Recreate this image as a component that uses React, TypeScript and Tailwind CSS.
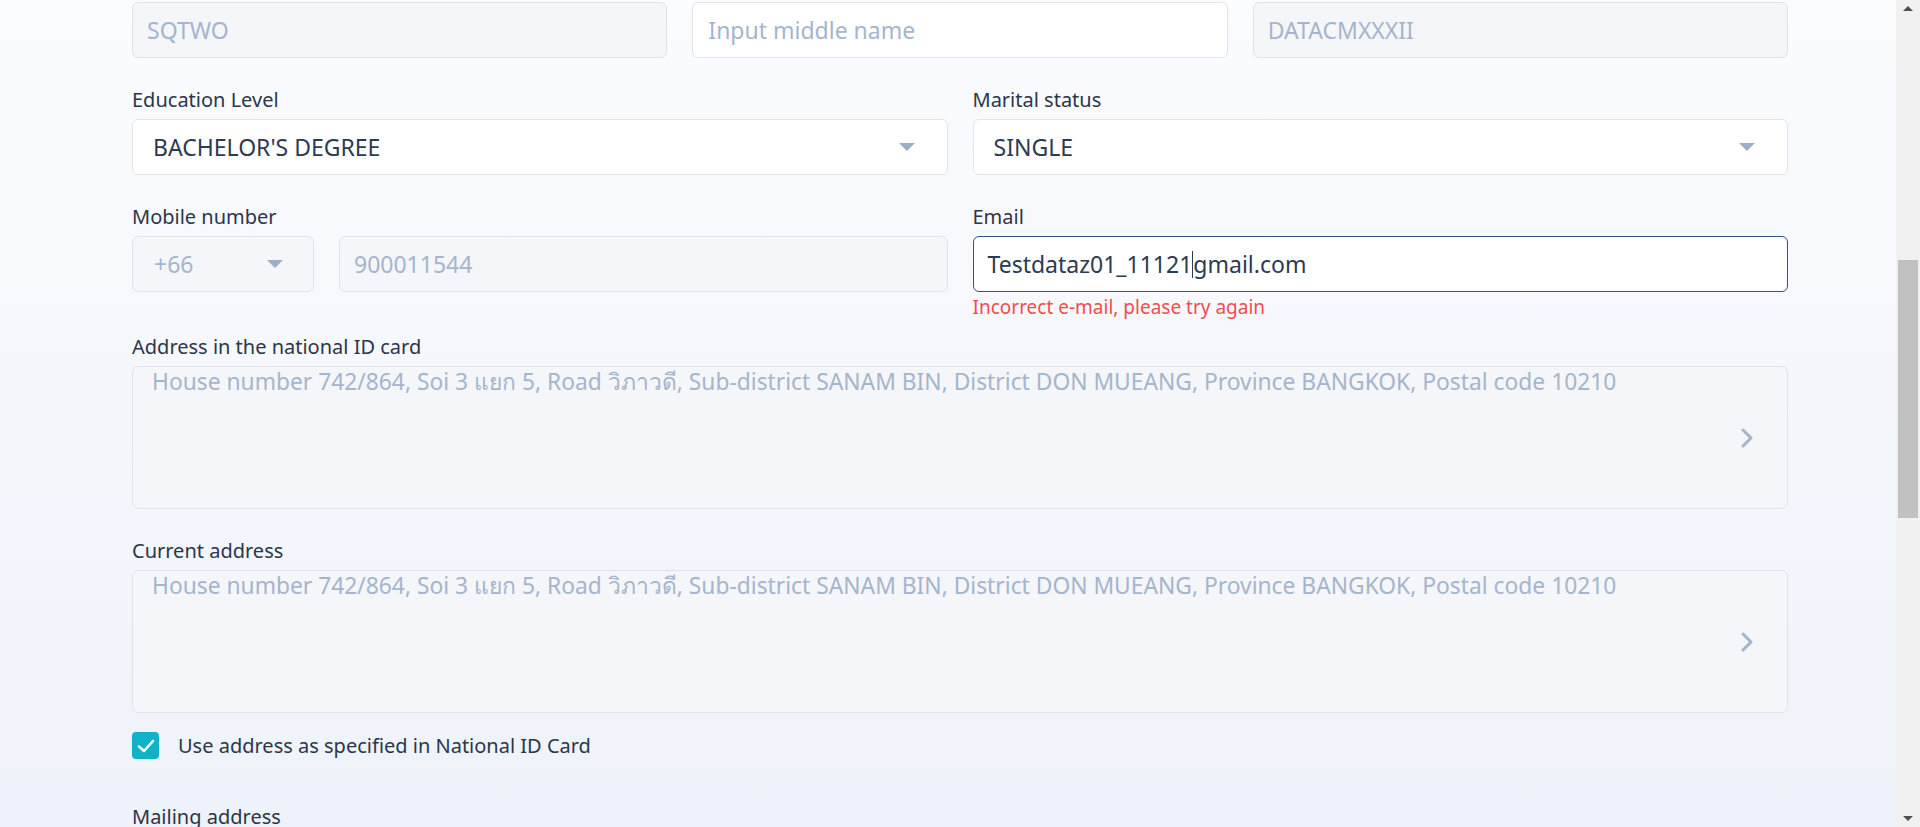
import React from "react";

const font = { fontFamily: '"Noto Sans", "Open Sans", "Noto Sans CJK SC", sans-serif' };

function Caret() {
  return (
    <svg width="16" height="8" viewBox="0 0 16 8" className="shrink-0">
      <path d="M0 0 H16 L8 8 Z" fill="#9eaec8" />
    </svg>
  );
}

function Chevron() {
  return (
    <svg width="12" height="20" viewBox="0 0 12 20" className="shrink-0">
      <path d="M2 2 L10 10 L2 18" fill="none" stroke="#a3b4cc" strokeWidth="3" strokeLinecap="round" strokeLinejoin="round" />
    </svg>
  );
}

function Label({ children }: { children: React.ReactNode }) {
  return <div className="text-[20px] leading-[27px] text-[#2b3648] mb-[6px]">{children}</div>;
}

function DisabledInput({ value }: { value: string }) {
  return (
    <div className="h-[56px] rounded-[6px] border border-[#dfe4ec] bg-[#f4f6fa] px-[14px] flex items-center text-[23px] text-[#a5b5cd]">
      {value}
    </div>
  );
}

function Select({ value }: { value: string }) {
  return (
    <div className="h-[56px] rounded-[6px] border border-[#e1e5ec] bg-white pl-[20px] pr-[32px] flex items-center justify-between text-[23px] text-[#2c3a52]">
      <span>{value}</span>
      <Caret />
    </div>
  );
}

function AddressBox({ text }: { text: string }) {
  return (
    <div className="h-[143px] rounded-[6px] border border-[#dfe4ec] bg-[#f4f6fa] pl-[19px] pr-[34px] flex justify-between">
      <div className="pt-0 text-[22.8px] leading-[30px] text-[#a5b5cd]">{text}</div>
      <div className="flex items-center">
        <Chevron />
      </div>
    </div>
  );
}

const address =
  "House number 742/864, Soi 3 แยก 5, Road วิภาวดี, Sub-district SANAM BIN, District DON MUEANG, Province BANGKOK, Postal code 10210";

export default function App() {
  return (
    <div className="h-[827px] w-full flex overflow-hidden" style={font}>
      <div className="flex-1 bg-gradient-to-b from-[#fbfcfe] to-[#eef2fa] pl-[132px] pr-[108px] pt-[2px]">
        <div className="grid grid-cols-3 gap-[25px]">
          <DisabledInput value="SQTWO" />
          <div className="h-[56px] rounded-[6px] border border-[#e1e5ec] bg-white px-[15px] flex items-center text-[23px] text-[#a5b5cd]">
            Input middle name
          </div>
          <DisabledInput value="DATACMXXXII" />
        </div>

        <div className="grid grid-cols-2 gap-[25px] mt-[28px]">
          <div>
            <Label>Education Level</Label>
            <Select value="BACHELOR'S DEGREE" />
          </div>
          <div>
            <Label>Marital status</Label>
            <Select value="SINGLE" />
          </div>
        </div>

        <div className="grid grid-cols-2 gap-[25px] mt-[28px]">
          <div>
            <Label>Mobile number</Label>
            <div className="flex gap-[25px]">
              <div className="w-[182px] h-[56px] rounded-[6px] border border-[#dfe4ec] bg-[#f4f6fa] pl-[21px] pr-[30px] flex items-center justify-between text-[23px] text-[#a5b5cd]">
                <span>+66</span>
                <Caret />
              </div>
              <div className="flex-1">
                <DisabledInput value="900011544" />
              </div>
            </div>
          </div>
          <div>
            <Label>Email</Label>
            <div className="h-[56px] rounded-[6px] border-[1.5px] border-[#34528a] bg-white px-[14px] flex items-center text-[23px] text-[#2c3a52]">
              <span>Testdataz01_11121</span>
              <span className="w-px h-[27px] bg-[#2c3a52]" />
              <span>gmail.com</span>
            </div>
            <div className="text-[19px] leading-[26px] mt-[2px] text-[#f24c4f]">Incorrect e-mail, please try again</div>
          </div>
        </div>

        <div className="mt-[13px]">
          <Label>Address in the national ID card</Label>
          <AddressBox text={address} />
        </div>

        <div className="mt-[28px]">
          <Label>Current address</Label>
          <AddressBox text={address} />
        </div>

        <div className="mt-[19px] flex items-center gap-[19px]">
          <div className="w-[27px] h-[27px] rounded-[4px] bg-[#10b2c9] flex items-center justify-center">
            <svg width="18" height="14" viewBox="0 0 18 14">
              <path d="M2 7.5 L7 12 L16 2" fill="none" stroke="white" strokeWidth="2.6" strokeLinecap="round" strokeLinejoin="round" />
            </svg>
          </div>
          <span className="text-[20px] leading-[27px] text-[#2b3648]">Use address as specified in National ID Card</span>
        </div>

        <div className="mt-[44px]">
          <Label>Mailing address</Label>
        </div>
      </div>

      <div className="w-[24px] bg-[#f1f1f1] flex flex-col items-center">
        <div className="h-[17px] flex items-center justify-center">
          <svg width="10" height="5" viewBox="0 0 10 5">
            <path d="M0 5 L5 0 L10 5 Z" fill="#505050" />
          </svg>
        </div>
        <div className="h-[243px]" />
        <div className="w-[20px] h-[258px] bg-[#c1c1c1]" />
        <div className="flex-1" />
        <div className="h-[17px] flex items-center justify-center">
          <svg width="10" height="5" viewBox="0 0 10 5">
            <path d="M0 0 L10 0 L5 5 Z" fill="#505050" />
          </svg>
        </div>
      </div>
    </div>
  );
}
